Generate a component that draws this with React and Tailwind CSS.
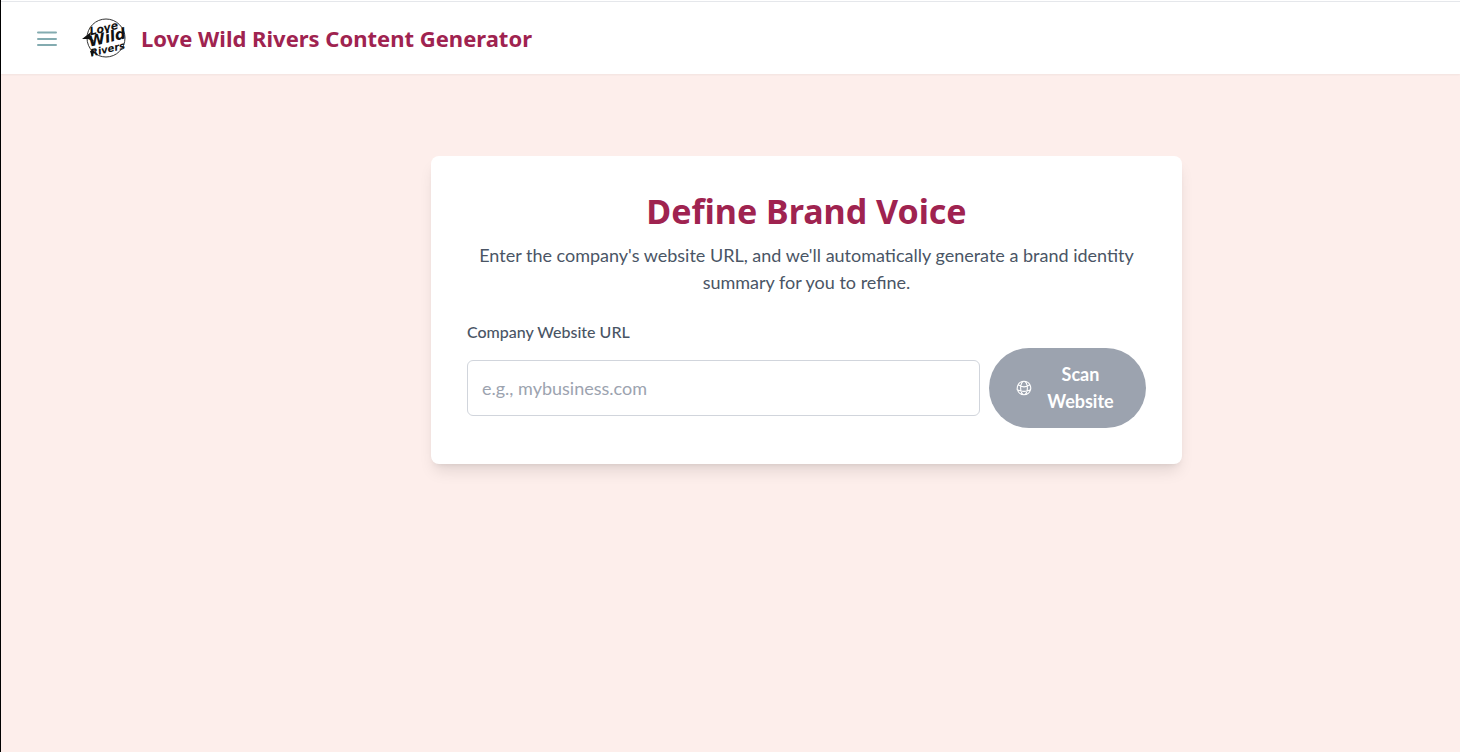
import { useState } from 'react'

function MenuIcon() {
  return (
    <svg className="w-7 h-7" viewBox="0 0 28 28" fill="none" stroke="currentColor" strokeWidth="2" strokeLinecap="round" aria-hidden="true">
      <path d="M5 8.5h18M5 15h18M5 21h18" />
    </svg>
  )
}

function GlobeIcon() {
  return (
    <svg className="w-[18px] h-[18px] shrink-0" viewBox="0 0 24 24" fill="none" stroke="currentColor" strokeWidth="1.5" strokeLinecap="round" strokeLinejoin="round" aria-hidden="true">
      <path d="M12 21a9.004 9.004 0 0 0 8.716-6.747M12 21a9.004 9.004 0 0 1-8.716-6.747M12 21c2.485 0 4.5-4.03 4.5-9S14.485 3 12 3m0 18c-2.485 0-4.5-4.03-4.5-9S9.515 3 12 3m0 0a8.997 8.997 0 0 1 7.843 4.582M12 3a8.997 8.997 0 0 0-7.843 4.582m15.686 0A11.953 11.953 0 0 1 12 10.5c-2.998 0-5.74-1.1-7.843-2.918m15.686 0A8.959 8.959 0 0 1 21 12c0 .778-.099 1.533-.284 2.253m0 0A17.919 17.919 0 0 1 12 16.5c-3.162 0-6.133-.815-9.042-2.247m0 0A9.015 9.015 0 0 1 3 12c0-1.605.42-3.113 1.157-4.418" />
    </svg>
  )
}

function Logo() {
  return (
    <svg className="w-12 h-12 shrink-0" viewBox="0 0 48 48" role="img" aria-label="Love Wild Rivers">
      <circle cx="25" cy="24" r="19" fill="#fff" stroke="#333" strokeWidth="1" />
      <g transform="rotate(-13 24 24)" fill="#111" fontFamily="'DejaVu Sans', sans-serif" fontWeight="700" fontStyle="italic" textAnchor="middle">
        <text x="25" y="18" fontSize="11">Love</text>
        <text x="26" y="29" fontSize="15">Wild</text>
        <text x="24" y="39" fontSize="10">Rivers</text>
      </g>
      <path d="M1 25l9-7-1 5 5 5-7-3z" fill="#111" />
      <path d="M9 37l5-1-3 7z" fill="#111" />
    </svg>
  )
}

function Header() {
  return (
    <header className="relative flex items-center h-[73px] px-8 bg-white border-t border-gray-200 shadow-xs">
      <button type="button" aria-label="Open menu" className="text-[#83abb0]">
        <MenuIcon />
      </button>
      <div className="flex items-center gap-3 ml-5">
        <Logo />
        <h1 className="text-[22px] leading-7 font-bold text-[#9f2350] font-['Noto_Sans',sans-serif]">
          Love Wild Rivers Content Generator
        </h1>
      </div>
    </header>
  )
}

function BrandVoiceCard() {
  const [url, setUrl] = useState('')

  return (
    <section className="w-full max-w-[751px] mx-auto p-9 bg-white rounded-lg shadow-lg">
      <div className="text-center mb-6">
        <h2 className="text-[34px] leading-[38px] font-bold text-[#9f2350] font-['Noto_Sans',sans-serif]">
          Define Brand Voice
        </h2>
        <p className="mt-3 text-lg leading-[27px] text-gray-600">
          Enter the company's website URL, and we'll automatically generate a brand identity summary for you to refine.
        </p>
      </div>
      <form onSubmit={e => e.preventDefault()}>
        <label htmlFor="website-url" className="block mb-1 text-base font-medium text-gray-600">
          Company Website URL
        </label>
        <div className="flex items-center gap-[9px]">
          <input
            id="website-url"
            type="text"
            value={url}
            onChange={e => setUrl(e.target.value)}
            placeholder="e.g., mybusiness.com"
            className="flex-1 min-w-0 h-14 px-[14px] text-lg text-gray-900 placeholder:text-[#9ca3af] bg-white border border-gray-300 rounded-md"
          />
          <button
            type="submit"
            disabled={!url}
            className="flex items-center justify-center gap-2 w-[157px] px-[26px] py-[13px] rounded-full bg-[#9f2350] disabled:bg-[#9ca3af] text-white text-lg leading-[27px] font-bold"
          >
            <GlobeIcon />
            <span className="flex-1 text-center">Scan Website</span>
          </button>
        </div>
      </form>
    </section>
  )
}

export default function App() {
  return (
    <div className="min-h-screen flex flex-col pt-px bg-white border-l border-black font-[Lato,sans-serif]">
      <Header />
      <main className="flex-1 pl-[152px] pt-[82px] bg-[#fdeeeb]">
        <BrandVoiceCard />
      </main>
    </div>
  )
}
